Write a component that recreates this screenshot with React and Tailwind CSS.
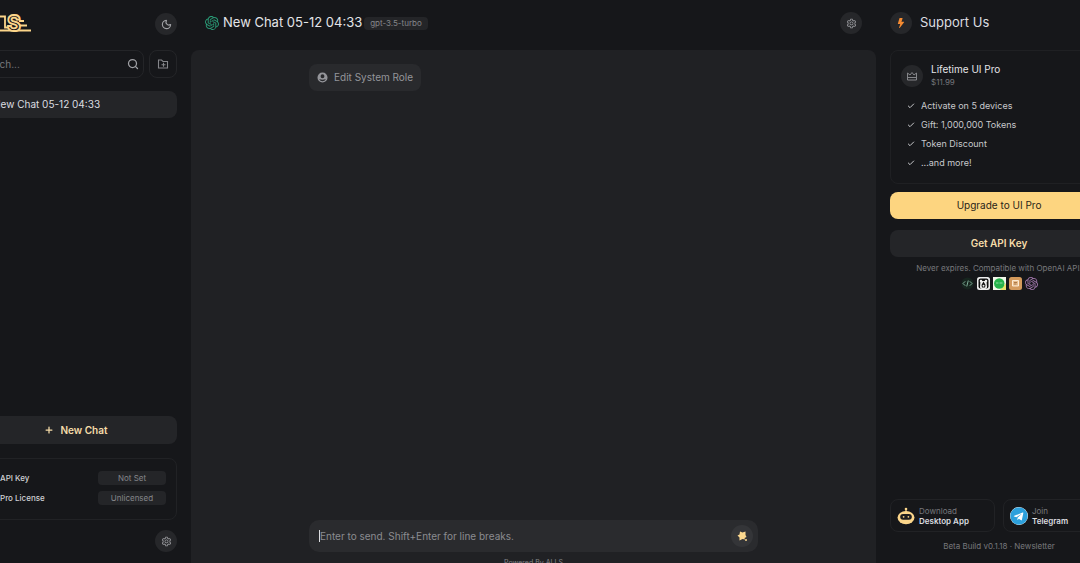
import { useState } from "react";
import { Search, Moon, Plus, Check } from "lucide-react";
import { SiOpenai } from "react-icons/si";
import { FaTelegram } from "react-icons/fa";
import { BsFillLightningFill } from "react-icons/bs";
import { AiOutlineSetting } from "react-icons/ai";

const perks = [
  "Activate on 5 devices",
  "Gift: 1,000,000 Tokens",
  "Token Discount",
  "...and more!",
];

const statuses = [
  { name: "API Key", value: "Not Set" },
  { name: "Pro License", value: "Unlicensed" },
];

function RoundButton({ label, children }) {
  return (
    <button
      aria-label={label}
      className="flex size-[22px] shrink-0 items-center justify-center rounded-full bg-[#26272a] text-[#a0a1a5]"
    >
      {children}
    </button>
  );
}

function Logo() {
  return (
    <svg
      viewBox="16 0 56 24"
      className="h-6 w-14"
      role="img"
      aria-label="ALLS"
    >
      <g fill="none" stroke="#fbd58a" strokeWidth="1.800">
        <path d="M40 4.500h6v11h4" />
        <path d="M60 9h5M60 13.500h8M36 18.500h36" />
      </g>
      <text
        x="48"
        y="19"
        fill="#16171a"
        stroke="#fbd58a"
        strokeWidth="1.800"
        className="font-['Inter'] text-[21px] font-bold"
      >
        S
      </text>
    </svg>
  );
}

function CrownIcon() {
  return (
    <svg
      viewBox="0 0 24 24"
      className="size-3"
      fill="none"
      stroke="currentColor"
      strokeWidth="2"
      strokeLinejoin="round"
    >
      <path d="M3 6l5 4 4-5 4 5 5-4v14H3zM3 15h18" />
    </svg>
  );
}

function FolderIcon() {
  return (
    <svg
      viewBox="0 0 24 24"
      className="size-3"
      fill="none"
      stroke="currentColor"
      strokeWidth="2.200"
    >
      <path d="M3 4h6l3 3h9v13H3zM9 13.500h8M13 9.500v8" />
    </svg>
  );
}

function UserIcon() {
  return (
    <svg viewBox="0 0 24 24" className="size-[11px]" fill="currentColor">
      <path
        fillRule="evenodd"
        d="M12 1a11 11 0 100 22 11 11 0 000-22zm0 4a4.200 4.200 0 110 8.400 4.200 4.200 0 010-8.400zm-7 10c2 1.200 4.500 1.800 7 1.800s5-.6 7-1.800c-1.200 3-4 5-7 5s-5.800-2-7-5z"
      />
    </svg>
  );
}

function SendIcon() {
  return (
    <svg viewBox="0 0 24 24" className="size-3" fill="#fdd98f">
      <path d="M8 3l5 2 6-2v7l2 4-4 2 1 3-5-1-6 3v-6l-4-4 4-2z" />
      <circle cx="20" cy="20" r="2" />
    </svg>
  );
}

function BotIcon() {
  return (
    <svg viewBox="0 0 34 34" className="size-[18px] shrink-0">
      <circle cx="17" cy="4" r="2.500" fill="#fbd58a" />
      <path d="M17 5v6" stroke="#fbd58a" strokeWidth="2" />
      <ellipse cx="17" cy="20" rx="16" ry="12.500" fill="#fbd58a" />
      <rect x="6" y="13" width="22" height="11" rx="5.500" fill="#1d1d1f" />
      <circle cx="12.500" cy="18.500" r="1.700" fill="#fbd58a" />
      <circle cx="21.500" cy="18.500" r="1.700" fill="#fbd58a" />
    </svg>
  );
}

function Apps() {
  return (
    <div className="mt-px flex items-center justify-center gap-[3px]">
      <svg viewBox="0 0 26 26" className="size-[13px]">
        <circle cx="13" cy="13" r="12" fill="#17251f" />
        <path
          d="M8.500 8.500L4 13l4.500 4.500M17.500 8.500L22 13l-4.500 4.500M14.500 7l-3 12"
          fill="none"
          stroke="#7fae98"
          strokeWidth="2"
        />
      </svg>
      <svg viewBox="0 0 26 26" className="size-[13px]">
        <rect width="26" height="26" rx="5" fill="#eee" />
        <rect x="3" y="3" width="20" height="20" rx="4" fill="#111" />
        <circle cx="8" cy="8" r="2.500" fill="#eee" />
        <circle cx="18" cy="8" r="2.500" fill="#eee" />
        <path d="M7 8h12l1 12a7 4 0 01-14 0z" fill="#eee" />
        <path d="M13 9l4 7-1 5h-6l-1-5z" fill="#111" />
        <circle cx="13" cy="17.500" r="2" fill="#eee" />
      </svg>
      <svg viewBox="0 0 26 26" className="size-[13px]">
        <rect width="26" height="26" fill="#f3f8ea" />
        <path d="M26 12v14H14z" fill="#e8e36a" />
        <circle cx="12.500" cy="13" r="10.500" fill="#27b34b" />
        <path d="M6 12h5M13 12h6" stroke="#8fdca2" strokeWidth="2" />
      </svg>
      <svg viewBox="0 0 26 26" className="size-[13px]">
        <rect width="26" height="26" rx="5" fill="#d49a5c" />
        <path
          d="M7 7h12v11H7z"
          fill="#e8bd8c"
          stroke="#fff0dc"
          strokeWidth="1.800"
        />
        <path d="M10 11h6M10 14h5" stroke="#9c6430" strokeWidth="1.500" />
      </svg>
      <SiOpenai className="size-[13px] text-[#a277ad]" />
    </div>
  );
}

function Sidebar() {
  return (
    <aside className="flex w-[191px] shrink-0 justify-end overflow-hidden">
      <div className="flex w-[230px] shrink-0 flex-col px-3.5 pt-3 pb-[11px]">
        <div className="flex items-center justify-between">
          <Logo />
          <RoundButton label="Toggle theme">
            <Moon className="size-[11px]" strokeWidth={2.5} />
          </RoundButton>
        </div>

        <div className="mt-3.5 flex gap-[5px]">
          <label className="flex h-7 min-w-0 flex-1 items-center rounded-lg border border-[#242528] pr-1 pl-0.5">
            <input
              type="text"
              aria-label="Search"
              placeholder="Search..."
              className="w-full min-w-0 text-[10px] text-[#dcdde0] outline-none placeholder:text-[#77787c]"
            />
            <Search
              className="size-3 shrink-0 text-[#a0a1a5]"
              strokeWidth={2.5}
            />
          </label>
          <button
            aria-label="New folder"
            className="flex size-7 items-center justify-center rounded-lg border border-[#242528] text-[#85868a]"
          >
            <FolderIcon />
          </button>
        </div>

        <button className="mt-[13px] flex h-[27px] items-center rounded-lg bg-[#242528] pl-[18px] text-[10px] text-[#dcdde0]">
          New Chat 05-12 04:33
        </button>

        <button className="mt-auto flex h-7 items-center justify-center gap-1.5 rounded-lg bg-[#242528] text-[10px] font-semibold text-[#f6dca8]">
          <Plus className="size-2.5" strokeWidth={3} />
          New Chat
        </button>

        <div className="mt-3.5 flex flex-col gap-1.5 rounded-lg border border-[#212225] px-2.5 pt-3 pb-3.5">
          {statuses.map((item) => (
            <div
              key={item.name}
              className="flex items-center justify-between pl-3.5 text-[8px] leading-[14px]"
            >
              <span className="font-medium text-[#d0d1d4]">{item.name}</span>
              <span className="w-[68px] rounded bg-[#242528] text-center text-[#85868a]">
                {item.value}
              </span>
            </div>
          ))}
        </div>

        <div className="mt-2.5 flex justify-end">
          <RoundButton label="Settings">
            <AiOutlineSetting className="size-[11px]" />
          </RoundButton>
        </div>
      </div>
    </aside>
  );
}

function Chat() {
  const [message, setMessage] = useState("");

  return (
    <main className="flex min-w-0 flex-1 flex-col">
      <header className="flex h-[50px] shrink-0 items-center px-3.5 pb-1">
        <SiOpenai className="size-3.5 text-[#2a9d78]" />
        <h1 className="ml-1 text-[13px] text-[#e4e5e8]">
          New Chat 05-12 04:33
        </h1>
        <span className="mr-auto ml-0.5 rounded bg-[#242528] px-1.5 text-[8px] leading-[13px] text-[#85868a]">
          gpt-3.5-turbo
        </span>
        <RoundButton label="Chat settings">
          <AiOutlineSetting className="size-[11px]" />
        </RoundButton>
      </header>

      <section className="flex min-h-0 flex-1 flex-col items-center overflow-hidden rounded-t-lg bg-[#202124]">
        <div className="flex w-full max-w-[449px] flex-1 flex-col items-start justify-between pt-3.5">
          <button className="flex h-[27px] items-center gap-1.5 rounded-lg bg-[#292a2d] px-2 text-[10px] text-[#94959a]">
            <UserIcon />
            Edit System Role
          </button>
          <div className="flex h-8 w-full items-center rounded-[10px] bg-[#2a2b2e] pr-[5px] pl-2.5">
            {message === "" && <span className="h-3 w-px bg-[#dcdde0]" />}
            <input
              type="text"
              aria-label="Message"
              value={message}
              onChange={(e) => setMessage(e.target.value)}
              placeholder="Enter to send. Shift+Enter for line breaks."
              className="min-w-0 flex-1 text-[10px] text-[#dcdde0] outline-none placeholder:text-[#8b8c90]"
            />
            <button
              aria-label="Send"
              className="flex size-[22px] items-center justify-center rounded-full bg-[#343538]"
            >
              <SendIcon />
            </button>
          </div>
        </div>
        <p className="mt-1.5 h-[5px] shrink-0 text-[7px] leading-[9px] text-[#85868a]">
          Powered By ALLS
        </p>
      </section>
    </main>
  );
}

function Support() {
  return (
    <aside className="w-[204px] shrink-0 overflow-hidden">
      <div className="flex h-full w-[246px] flex-col px-3.5 pt-3 pb-[11px]">
        <div className="flex h-[22px] items-center gap-2">
          <RoundButton label="Support">
            <BsFillLightningFill className="size-2.5 text-[#f58b32]" />
          </RoundButton>
          <h2 className="text-[13px] text-[#dcdde0]">Support Us</h2>
        </div>

        <div className="mt-4 h-[134px] rounded-lg border border-[#1f2023] px-2.5 pt-[11px]">
          <div className="flex items-center gap-2">
            <span className="flex size-[22px] items-center justify-center rounded-full bg-[#26272a] text-[#85868a]">
              <CrownIcon />
            </span>
            <div>
              <h3 className="text-[10px] leading-[14px] text-[#e4e5e8]">
                Lifetime UI Pro
              </h3>
              <p className="text-[8px] leading-[13px] text-[#77787c]">$11.99</p>
            </div>
          </div>
          <ul className="mt-2.5 flex flex-col gap-[5px] pl-1.5">
            {perks.map((perk) => (
              <li
                key={perk}
                className="flex items-center gap-1.5 text-[9px] leading-[14px] text-[#c8c9cc]"
              >
                <Check className="size-2" strokeWidth={3} />
                {perk}
              </li>
            ))}
          </ul>
        </div>

        <button className="mt-2 h-[27px] shrink-0 rounded-lg bg-[#fdd580] text-[10px] text-[#2a2418]">
          Upgrade to UI Pro
        </button>
        <button className="mt-[11px] h-[27px] shrink-0 rounded-lg bg-[#242528] text-[10px] font-semibold text-[#f6dca8]">
          Get API Key
        </button>
        <p className="mt-1 text-center text-[8px] leading-[15px] text-[#77787c]">
          Never expires. Compatible with OpenAI API.
        </p>
        <Apps />

        <div className="mt-auto grid grid-cols-2 gap-2">
          <a
            href="#desktop"
            className="flex h-[33px] items-center gap-1 rounded-lg border border-[#212225] px-1.5"
          >
            <BotIcon />
            <span className="text-[8px] leading-[10px] text-[#77787c]">
              Download
              <b className="block font-semibold whitespace-nowrap text-[#dcdde0]">
                Desktop App
              </b>
            </span>
          </a>
          <a
            href="#telegram"
            className="flex h-[33px] items-center gap-1 rounded-lg border border-[#212225] px-1.5"
          >
            <FaTelegram className="size-[18px] shrink-0 rounded-full bg-white text-[#2ca0dc]" />
            <span className="text-[8px] leading-[10px] text-[#77787c]">
              Join
              <b className="block font-semibold text-[#dcdde0]">Telegram</b>
            </span>
          </a>
        </div>
        <p className="mt-2 text-center text-[8px] leading-3 text-[#77787c]">
          Beta Build v0.1.18 · <a href="#newsletter">Newsletter</a>
        </p>
      </div>
    </aside>
  );
}

function App() {
  return (
    <div className="flex h-screen overflow-hidden bg-[#16171a] font-['Inter',sans-serif]">
      <Sidebar />
      <Chat />
      <Support />
    </div>
  );
}

export default App;
